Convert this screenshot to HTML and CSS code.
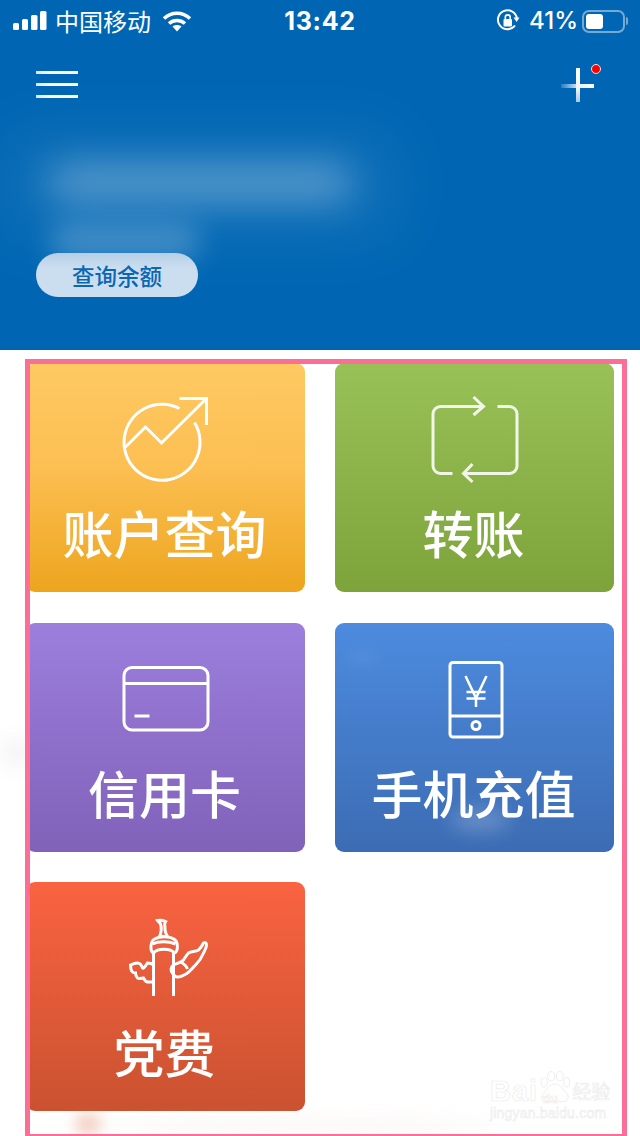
FILE: index.html
```html
<!DOCTYPE html>
<html lang="zh-CN">
<head>
<meta charset="utf-8">
<title>手机银行</title>
<link rel="stylesheet" href="styles.css">
</head>
<body>
<div class="screen">
  <header class="hero">
    <span class="blob blob-a"></span>
    <span class="blob blob-b"></span>
    <span class="blob blob-c"></span>
    <div class="status">
      <div class="status-left">
        <svg class="signal" viewBox="0 0 34 20" aria-hidden="true">
          <rect x="0" y="12" width="6" height="7" rx="1.5"/>
          <rect x="9" y="8" width="6" height="11" rx="1.5"/>
          <rect x="18" y="4" width="6.500" height="15" rx="1.5"/>
          <rect x="27" y="0" width="6.500" height="19" rx="1.500"/>
        </svg>
        <span class="carrier">中国移动</span>
        <svg class="wifi" viewBox="0 0 30 22" aria-hidden="true">
          <path d="M2 8.500C9.500 1.500 20.500 1.500 28 8.500" />
          <path d="M7 13.500C11.500 9.500 18.500 9.500 23 13.500" />
          <path class="wifi-dot" d="M10.500 16.500C13 14.500 17 14.500 19.500 16.500L15 21.500Z"/>
        </svg>
      </div>
      <div class="time">13:42</div>
      <div class="status-right">
        <svg class="rotlock" viewBox="0 0 24 24" aria-hidden="true">
          <path class="rot-line" d="M19 16.500A9.500 9.500 0 1 1 20.800 9"/>
          <path class="rot-fill" d="M23.500 8.500L17.500 8.500L20.700 13Z"/>
          <rect class="rot-fill" x="7.500" y="10" width="8.500" height="7.500" rx="1"/>
          <path class="rot-line rot-thin" d="M9.300 10V8.300A2.450 2.450 0 0 1 14.200 8.300V10"/>
        </svg>
        <span class="percent">41%</span>
        <div class="battery"><span class="battery-fill"></span></div>
        <span class="battery-cap"></span>
      </div>
    </div>
    <nav class="nav">
      <div class="menu"><span></span><span></span><span></span></div>
      <div class="add">
        <span class="add-h"></span>
        <span class="add-v"></span>
        <span class="add-dot"></span>
      </div>
    </nav>
    <button class="balance" type="button">查询余额</button>
  </header>

  <main class="grid">
    <a class="tile tile-yellow">
      <svg class="icon" viewBox="100.500 390 130 100" aria-hidden="true">
        <path d="M179 408.500A38 38 0 1 0 194 422.500"/>
        <path d="M125 447L145 427L161 443L206 398.500"/>
        <path d="M179 398.500H206V425"/>
      </svg>
      <span class="label">账户查询</span>
    </a>
    <a class="tile tile-green">
      <svg class="icon icon-fade" viewBox="409.500 390 130 100" aria-hidden="true">
        <path d="M483 406.500H440A7.500 7.500 0 0 0 432.500 414V466A7.500 7.500 0 0 0 440 473.500H452"/>
        <path d="M473 397L483 406.500L473 415"/>
        <path d="M497 406.500H509A7.500 7.500 0 0 1 516.500 414V466A7.500 7.500 0 0 1 509 473.500H463"/>
        <path d="M472 464L463 473.500L472 482"/>
      </svg>
      <span class="label">转账</span>
    </a>
    <a class="tile tile-purple">
      <svg class="icon" viewBox="100.500 650 130 100" aria-hidden="true">
        <rect x="123.500" y="667.500" width="84" height="62.500" rx="8"/>
        <path d="M123.500 683.500H207.500"/>
        <path d="M134 716H149"/>
      </svg>
      <span class="label">信用卡</span>
    </a>
    <a class="tile tile-blue">
      <svg class="icon" viewBox="409.500 650 130 100" aria-hidden="true">
        <rect x="449.500" y="662.500" width="52" height="74.500" rx="3"/>
        <path d="M449.500 716H501.500"/>
        <circle cx="475.500" cy="725.500" r="4"/>
        <path class="thin" d="M465 676L475.500 698L486 676"/>
        <path class="thin" d="M475.500 698V707M466 692H485M466 698.500H485"/>
      </svg>
      <span class="label">手机充值</span>
    </a>
    <a class="tile tile-red">
      <svg class="icon" viewBox="100.500 909 130 100" aria-hidden="true">
        <path d="M157 920.500C160 920 163 920.500 165 921.500C163 924 165 926 164.500 930C165 933 166 935 167 936.500H159C161 932 161 927 160 924C159.500 922.500 158 922 157 920.500Z"/>
        <path d="M153 953V996M173 953V996"/>
        <path d="M153 953C149 951 150 941 154 939C159 936 169 936 173 939C178 941 178 951 174 953C170 948 157 948 153 953Z"/>
        <path d="M152 944C158 941 168 941 175 944"/>
        <path d="M153 965C151 963 149 963 147 963C145 966 143 969 142 968C141 965 139 963 137 963C134 963 132 964 130 965C130 968 131 971 132 972C133 973 134 973 135 973C135 975 136 977 137 978C139 979 141 978 143 978C144 980 146 982 147 982L153 982"/>
        <path d="M173 965C177 963 180 963 183 960C185 957 186 955 188 953C191 951 195 952 198 950C200 948 202 945 203 943C205 942 206 943 206 945C206 948 204 951 203 953C201 958 198 962 195 965C192 968 190 971 187 973C184 975 180 977 177 977C175 977 173 975 172 973C170 971 170 967 173 965Z"/>
        <path d="M180 962C184 964 186 966 187 969"/>
      </svg>
      <span class="label">党费</span>
    </a>
  </main>

  <span class="smudge smudge-a"></span>
  <span class="smudge smudge-b"></span>
  <span class="smudge smudge-c"></span>
  <span class="smudge smudge-d"></span>
  <span class="smudge smudge-e"></span>

  <div class="highlight"></div>

  <div class="watermark">
    <div class="wm-row">
      <span class="wm-bai">Bai</span>
      <svg class="wm-paw" viewBox="0 0 44 42" aria-hidden="true">
        <ellipse cx="8" cy="15" rx="4" ry="6"/>
        <ellipse cx="17" cy="7" rx="4.500" ry="6"/>
        <ellipse cx="28" cy="7" rx="4.500" ry="6"/>
        <ellipse cx="37" cy="15" rx="4" ry="6"/>
        <path d="M22 17C14 17 12 25 8 28C2 33 6 41 14 40C19 39 26 39 31 40C39 41 42 33 36 28C32 25 30 17 22 17Z"/>
      </svg>
      <span class="wm-cn">经验</span>
    </div>
    <div class="wm-url">jingyan.baidu.com</div>
    <span class="wm-du">du</span>
  </div>
</div>
</body>
</html>
```

FILE: styles.css
```css
* { box-sizing: border-box; }

html, body {
  margin: 0;
  padding: 0;
  background: #fff;
}

.screen {
  position: relative;
  width: 640px;
  height: 1136px;
  overflow: hidden;
  background: #fff;
  font-family: "Noto Sans CJK SC", "Noto Sans", sans-serif;
}

/* Header */
.hero {
  position: relative;
  height: 350px;
  overflow: hidden;
  background: #0066b3;
  color: #fff;
}

.blob {
  position: absolute;
  background: #fff;
  border-radius: 30px;
}
.blob-a { left: 48px; top: 162px; width: 305px; height: 42px; opacity: .27; filter: blur(18px); }
.blob-b { left: 50px; top: 224px; width: 150px; height: 36px; opacity: .24; filter: blur(14px); }
.blob-c { left: 0; top: 130px; width: 400px; height: 110px; opacity: .06; filter: blur(30px); }

.status {
  position: relative;
  display: grid;
  grid-template-columns: 1fr auto 1fr;
  align-items: center;
  height: 42px;
  padding: 0 13px;
}
.status-left, .status-right { display: flex; align-items: center; }
.status-right { justify-content: flex-end; }

.signal { width: 34px; height: 20px; fill: #fff; }
.carrier { margin-left: 8px; font-size: 24px; line-height: 42px; }
.wifi { width: 30px; height: 22px; margin-left: 11px; fill: none; stroke: #fff; stroke-width: 3.500; }
.wifi .wifi-dot { fill: #fff; stroke: none; }
.time {
  font-family: "Inter", "Liberation Sans", sans-serif;
  font-size: 25px;
  font-weight: 700;
  letter-spacing: .7px;
  line-height: 42px;
}
.rotlock { width: 24px; height: 24px; margin-right: -1px; }
.rot-line { fill: none; stroke: #fff; stroke-width: 2; }
.rot-thin { stroke-width: 1.600; }
.rot-fill { fill: #fff; }
.percent {
  margin-left: 10px;
  font-family: "Inter", "Liberation Sans", sans-serif;
  font-size: 24px;
  font-weight: 500;
  line-height: 42px;
}
.battery {
  width: 43px;
  height: 23px;
  margin-left: 4px;
  padding: 2px;
  border: 2px solid rgba(255, 255, 255, .45);
  border-radius: 7px;
}
.battery-fill {
  display: block;
  width: 17px;
  height: 100%;
  background: #fff;
  border-radius: 3px;
}
.battery-cap {
  width: 2px;
  height: 8px;
  margin-left: 1px;
  margin-right: -1px;
  background: rgba(255, 255, 255, .45);
  border-radius: 0 2px 2px 0;
}

.nav {
  position: relative;
  display: flex;
  justify-content: space-between;
  align-items: flex-start;
  padding: 26px 46px 0 36px;
}
.menu {
  display: flex;
  flex-direction: column;
  gap: 9px;
  width: 42px;
  padding-top: 3px;
}
.menu span {
  display: block;
  height: 3px;
  background: linear-gradient(90deg, #d7e6f3, #fff 35%, #fff);
}
.add {
  position: relative;
  width: 33px;
  height: 34px;
}
.add-h {
  position: absolute;
  left: 0;
  top: 16px;
  width: 33px;
  height: 4px;
  background: linear-gradient(90deg, rgba(255, 255, 255, .15), #e8f0f8 55%, #fff);
}
.add-v {
  position: absolute;
  left: 15px;
  top: 0;
  width: 4px;
  height: 34px;
  background: linear-gradient(180deg, #fff, #f0f5fa 60%, #a8c8e4);
}
.add-dot {
  position: absolute;
  left: 30px;
  top: -4px;
  width: 10px;
  height: 10px;
  background: #f00;
  border: 1px solid #f8dede;
  border-radius: 50%;
}

.balance {
  position: absolute;
  left: 36px;
  top: 253px;
  width: 162px;
  height: 44px;
  padding: 0;
  border: 0;
  border-radius: 22px;
  background: linear-gradient(180deg, #b6cfe6, #cbdef0 35%, #cbdef0);
  color: #0a67b3;
  font-family: inherit;
  font-size: 22.500px;
  font-weight: 500;
  line-height: 44px;
}

/* Tiles */
.grid {
  display: grid;
  grid-template-columns: 279px 279px;
  grid-auto-rows: 229.500px;
  align-items: start;
  gap: 30px;
  padding: 13px 0 0 26px;
}

.tile {
  display: flex;
  flex-direction: column;
  align-items: center;
  height: 229px;
  padding-top: 27px;
  border-radius: 9px;
  color: #fff;
}
.tile-yellow { background: linear-gradient(180deg, #fec963, #fcbf52 45%, #eda51e); }
.tile-green  { background: linear-gradient(180deg, #98c157, #7da43a); }
.tile-purple { background: linear-gradient(180deg, #9c7edd, #8062b9); }
.tile-blue   { background: linear-gradient(180deg, #4d8bdf, #3c6cb3); }
.tile-red    { background: linear-gradient(180deg, #f96341, #ca5230); }

.icon {
  display: block;
  width: 130px;
  height: 100px;
  fill: none;
  stroke: #fff;
  stroke-width: 3;
}
.icon .thin { stroke-width: 2.500; }
.icon-fade { opacity: .88; }

.label {
  margin-top: 12px;
  padding-right: 2px;
  font-size: 51px;
  font-weight: 500;
  line-height: 60px;
  white-space: nowrap;
}

/* Faint compression smudges */
.smudge {
  position: absolute;
  border-radius: 50%;
  pointer-events: none;
}
.smudge-a { left: 0; top: 738px; width: 34px; height: 30px; background: #6b6b90; opacity: .07; filter: blur(10px); }
.smudge-b { left: 450px; top: 808px; width: 60px; height: 24px; background: #fff; opacity: .2; filter: blur(9px); }
.smudge-c { left: 345px; top: 650px; width: 34px; height: 16px; background: #fff; opacity: .04; filter: blur(6px); }
.smudge-d { left: 74px; top: 1112px; width: 28px; height: 24px; background: #dc7a55; opacity: .32; filter: blur(7px); }
.smudge-e { left: 100px; top: 1118px; width: 400px; height: 16px; background: #dcb8a8; opacity: .1; filter: blur(9px); }

/* Pink highlight frame drawn over the screenshot */
.highlight {
  position: absolute;
  left: 25px;
  top: 359px;
  width: 602px;
  height: 779.500px;
  border: 5.500px solid #fb6f97;
  pointer-events: none;
}

/* Watermark */
.watermark {
  position: absolute;
  left: 490px;
  top: 1066px;
  width: 120px;
  color: #fff;
  -webkit-text-stroke: .7px #ececec;
  font-family: "Liberation Sans", sans-serif;
  pointer-events: none;
}
.wm-row { display: flex; align-items: flex-end; height: 40px; }
.wm-bai { font-size: 29px; font-weight: 700; line-height: 30px; letter-spacing: 1px; }
.wm-paw {
  flex: none;
  width: 34px;
  height: 38px;
  fill: #fff;
  stroke: #ececec;
  stroke-width: 1.200;
}
.wm-cn {
  flex: none;
  font-family: "Noto Sans CJK SC", sans-serif;
  font-size: 19px;
  line-height: 24px;
  margin-bottom: 3px;
}
.wm-url { font-size: 14px; line-height: 15px; margin-top: 0; letter-spacing: .2px; -webkit-text-stroke: .5px #e8e8e8; }
.wm-du {
  position: absolute;
  left: 52px;
  top: 26px;
  font-size: 13px;
  font-weight: 700;
  line-height: 13px;
}
```
